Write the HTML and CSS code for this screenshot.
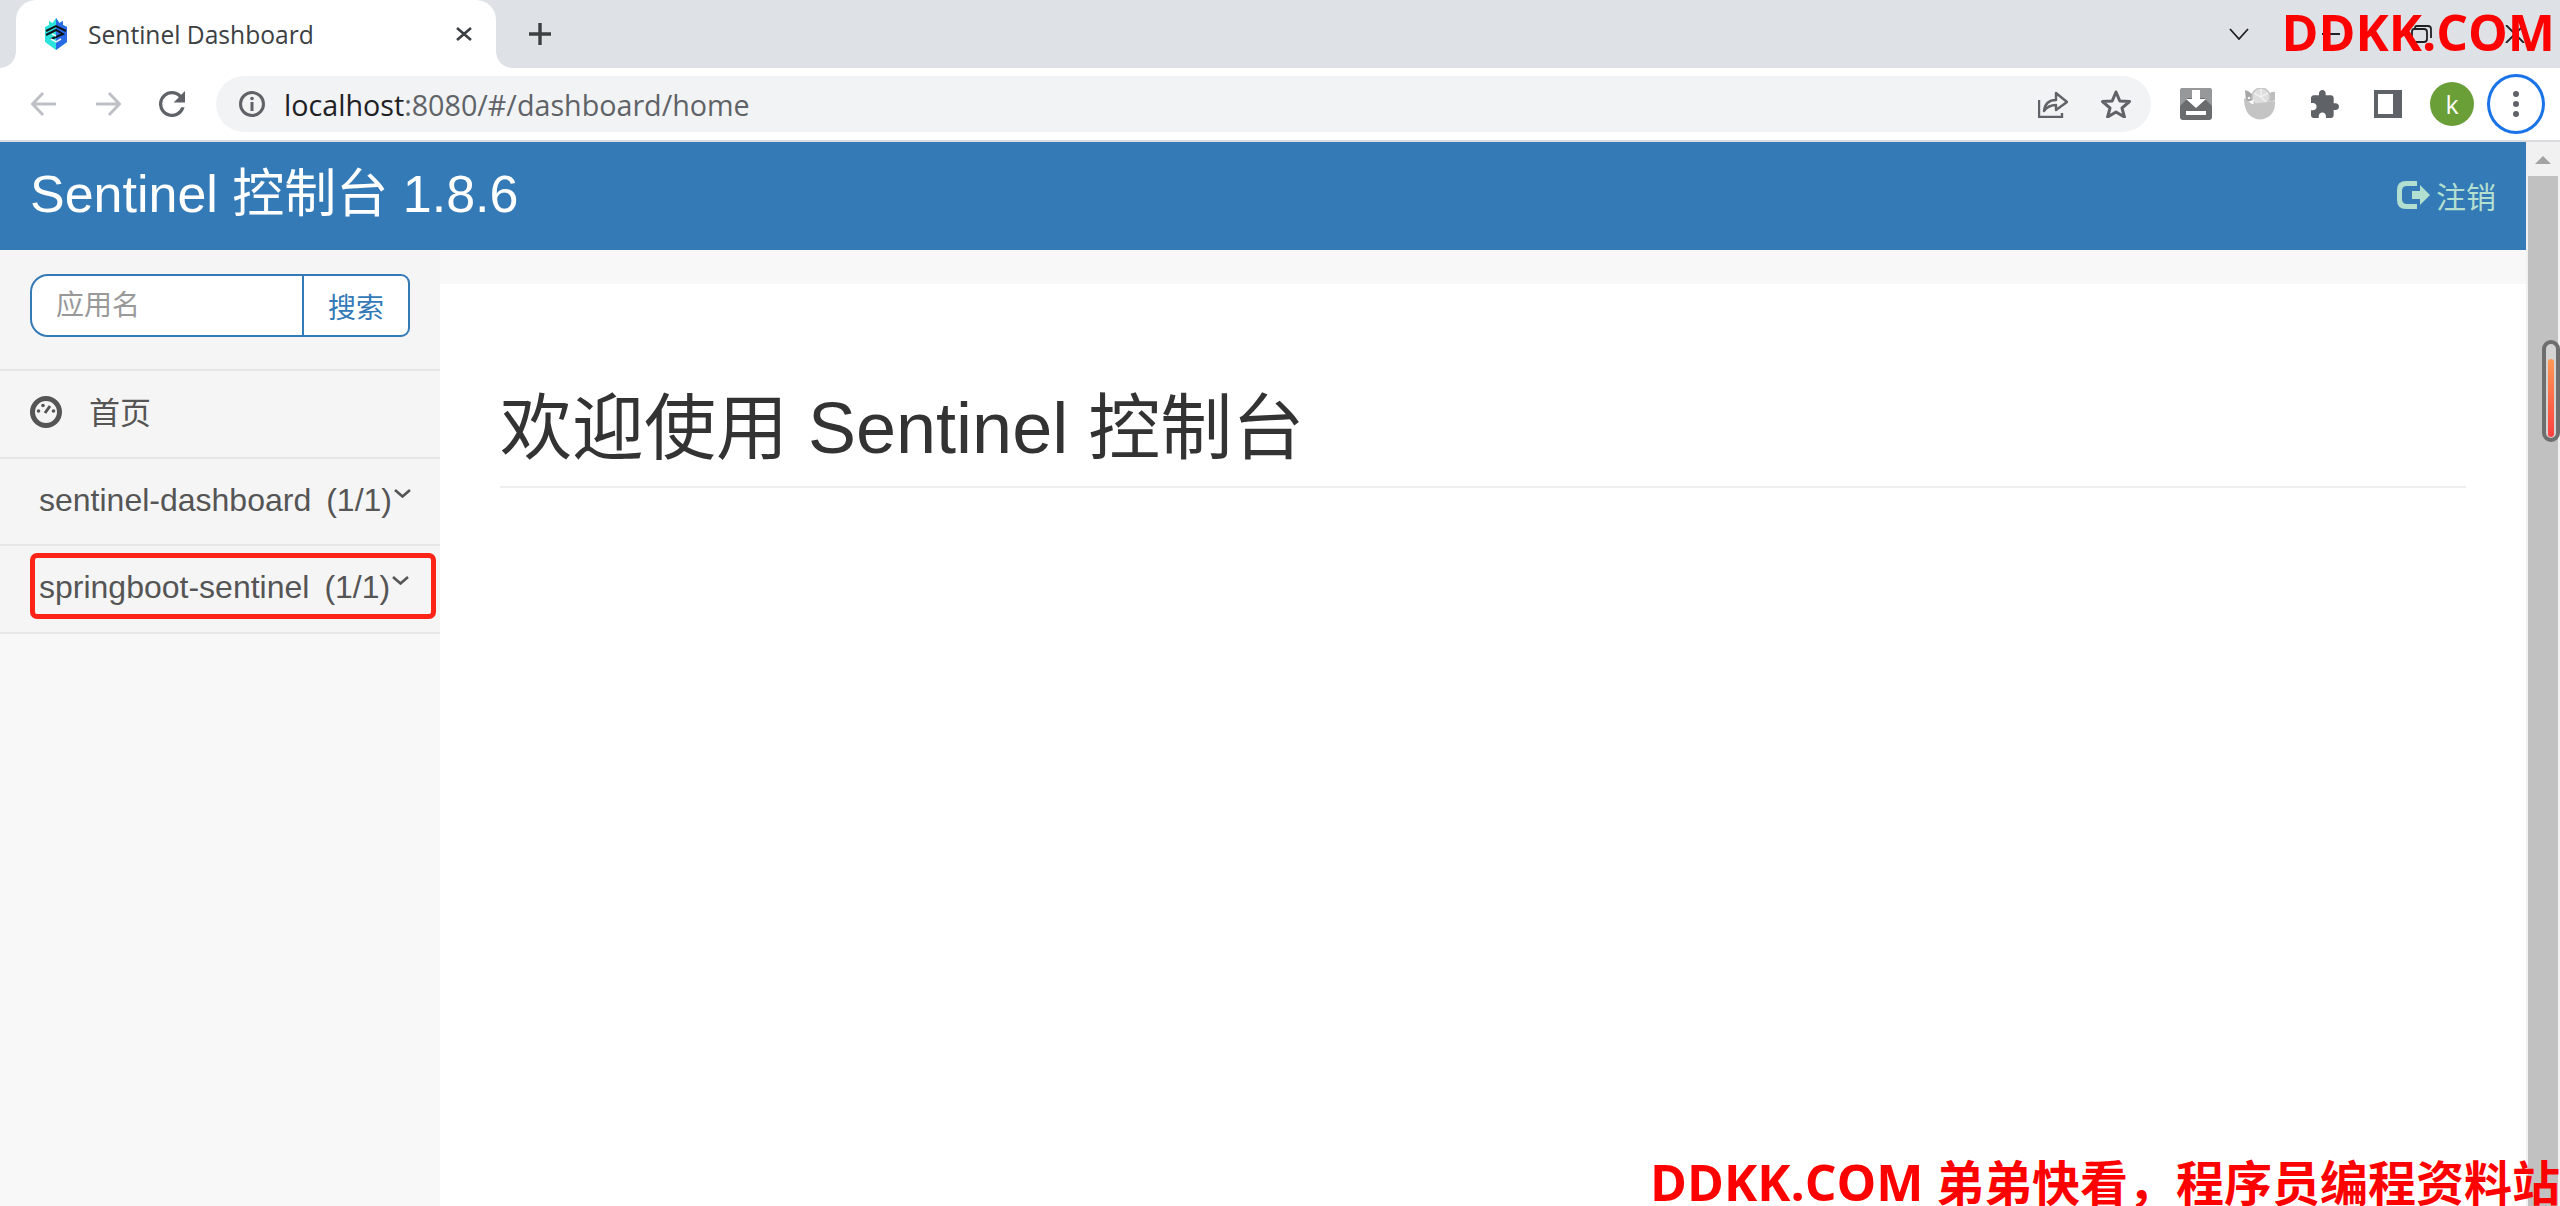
FILE: index.html
```html
<!DOCTYPE html>
<html>
<head>
  <title>Sentinel Dashboard</title>
  <link rel="stylesheet" href="styles.css">
</head>
<body>

  <!-- browser tabs -->
  <div class="tabstrip">
    <div class="tab">
      <svg class="favicon" viewBox="0 0 22 32">
        <path d="M0 9 L4 7 V3 L7.5 5 L11 0 L14.5 5 L18 3 V7 L22 9 V24 L11 32 L0 24Z" fill="#2be3dc"/>
        <path d="M11 0 L14.5 5 L18 3 V7 L22 9 V24 L11 32Z" fill="#2a6ae6"/>
        <path d="M1 13 L11 8 L21 13 M1 17 L11 12 L18 16 L6 21" fill="none" stroke="#10141c" stroke-width="2"/>
        <path d="M6 21 L11 24 L16 21 M7 16 L11 18" fill="none" stroke="#e6fbff" stroke-width="1.5"/>
      </svg>
      <span class="tab-title">Sentinel Dashboard</span>
      <svg class="tab-close" viewBox="0 0 18 14"><path d="M2 1 L16 13 M16 1 L2 13" stroke="#3c4043" stroke-width="2.6"/></svg>
    </div>
    <svg class="new-tab" viewBox="0 0 24 22"><path d="M12 0 V22 M1 11 H23" stroke="#3c4043" stroke-width="3.4"/></svg>
    <svg class="tab-list" viewBox="0 0 20 12"><path d="M1 1 L10 11 L19 1" fill="none" stroke="#202124" stroke-width="1.8"/></svg>
    <div class="win-min"></div>
    <svg class="win-max" viewBox="0 0 21 18"><path d="M4 3 Q4 1 6 1 H17 Q20 1 20 4 V13 M3 4 H13 Q16 4 16 7 V14 Q16 17 13 17 H4 Q1 17 1 14 V7 Q1 4 3 4Z" fill="none" stroke="#202124" stroke-width="1.8"/></svg>
    <svg class="win-close" viewBox="0 0 20 18"><path d="M1 0 L19 18 M19 0 L1 18" stroke="#202124" stroke-width="1.8"/></svg>
  </div>

  <!-- browser toolbar -->
  <div class="toolbar">
    <svg class="nav-icon" viewBox="0 0 26 24"><path d="M25 12 H2 M12 1 L1.5 12 L12 23" fill="none" stroke="#bdc1c6" stroke-width="3"/></svg>
    <svg class="nav-icon" viewBox="0 0 26 24"><path d="M1 12 H24 M14 1 L24.5 12 L14 23" fill="none" stroke="#bdc1c6" stroke-width="3"/></svg>
    <svg class="nav-icon reload" viewBox="4 4 16 16"><path d="M17.65 6.35A7.96 7.96 0 0 0 12 4a8 8 0 1 0 7.74 10h-2.08A6 6 0 1 1 12 6c1.66 0 3.14.69 4.22 1.78L13 11h7V4l-2.35 2.35z" fill="#5f6368"/></svg>
    <div class="omnibox">
      <svg class="info" viewBox="0 0 26 26"><circle cx="13" cy="13" r="11.5" fill="none" stroke="#5f6368" stroke-width="3"/><path d="M13 11 V20" stroke="#5f6368" stroke-width="3"/><circle cx="13" cy="7.5" r="1.8" fill="#5f6368"/></svg>
      <span class="url"><b>localhost</b>:8080/#/dashboard/home</span>
      <svg class="share" viewBox="0 0 30 28"><path d="M1 10 V27 H24 V23" fill="none" stroke="#5f6368" stroke-width="2.4"/><path d="M6 21 C7 13 12 10 18 10 V3 L29 12 L18 20 V15 C13 15 9 17 6 21Z" fill="none" stroke="#5f6368" stroke-width="2.4" stroke-linejoin="round"/></svg>
      <svg class="star" viewBox="0 0 30 28"><path d="M15 2 L18.8 11 L28.5 11.6 L21 18 L23.4 27 L15 22 L6.6 27 L9 18 L1.5 11.6 L11.2 11Z" fill="none" stroke="#5f6368" stroke-width="3" stroke-linejoin="round"/></svg>
    </div>
    <svg class="ext-download" viewBox="0 0 32 32">
      <rect width="32" height="32" rx="3" fill="#6a6c6e"/>
      <path d="M0 3 Q0 0 3 0 H29 Q32 0 32 3 V18 L24 10 H8 L0 18Z" fill="#96989a"/>
      <path d="M12 2 H20 V11 H26 L16 20 L6 11 H12Z" fill="#fff"/>
      <rect x="6" y="23" width="20" height="4" fill="#fff"/>
    </svg>
    <svg class="ext-bowl" viewBox="0 0 32 32">
      <path d="M1 2 Q9 4 10 12 L2 14Z" fill="#a6a6a6"/>
      <path d="M31 4 Q26 3 24 9 L27 14 L31 12Z" fill="#bdbdbd"/>
      <circle cx="17" cy="9" r="9" fill="#dedede" stroke="#c6c6c6" stroke-width="1.5"/>
      <path d="M17 9 V1 M17 9 L24 5 M17 9 L23 15 M17 9 L10 5" stroke="#f4f4f4" stroke-width="1.2"/>
      <path d="M0 10 L8 16 L31 13 Q32 26 22 30 Q16 33 10 30 Q0 26 0 10Z" fill="#c4c4c4"/>
      <circle cx="5" cy="10" r="1.3" fill="#f2f2f2"/><circle cx="9" cy="13" r="1.3" fill="#f2f2f2"/>
    </svg>
    <svg class="ext-puzzle" viewBox="2 1 21 21"><path d="M20.5 11H19V7c0-1.1-.9-2-2-2h-4V3.5C13 2.12 11.88 1 10.5 1S8 2.12 8 3.5V5H4c-1.1 0-1.99.9-1.99 2v3.8H3.5c1.49 0 2.7 1.21 2.7 2.7s-1.21 2.7-2.7 2.7H2V20c0 1.1.9 2 2 2h3.8v-1.5c0-1.49 1.21-2.7 2.7-2.7 1.49 0 2.7 1.21 2.7 2.7V22H17c1.1 0 2-.9 2-2v-4h1.5c1.38 0 2.5-1.12 2.5-2.5S21.88 11 20.5 11z" fill="#5f6368"/></svg>
    <div class="side-panel"></div>
    <div class="avatar">k</div>
    <div class="menu-ring"><span></span><span></span><span></span></div>
  </div>

  <div class="page">
    <div class="app">
      <div class="navbar">
        <span class="brand">Sentinel 控制台 1.8.6</span>
        <span class="logout">
          <svg class="logout-icon" viewBox="0 0 33 28">
            <path d="M20 0 H9 Q0 0 0 9 V19 Q0 28 9 28 H20 V23 H10 Q5 23 5 18 V10 Q5 5 10 5 H20Z" fill="#b2dfd0"/>
            <path d="M15 10 H23 V4 L33 14 L23 24 V18 H15Z" fill="#b2dfd0"/>
          </svg>
          注销
        </span>
      </div>
      <div class="columns">
        <div class="sidebar">
          <div class="search">
            <div class="search-box">
              <input class="search-input" placeholder="应用名">
              <span class="search-btn">搜索</span>
            </div>
          </div>
          <div class="side-row home">
            <svg class="home-icon" viewBox="0 0 32 32">
              <circle cx="16" cy="16" r="13.5" fill="#f5f5f5" stroke="#555" stroke-width="5"/>
              <circle cx="8.5" cy="15" r="1.8" fill="#555"/><circle cx="13" cy="9.5" r="1.8" fill="#555"/>
              <circle cx="23.5" cy="15" r="1.8" fill="#555"/>
              <path d="M15 17 L20 10" stroke="#555" stroke-width="3"/>
            </svg>
            <span>首页</span>
          </div>
          <div class="side-row app-row">
            <span>sentinel-dashboard</span><span class="count">(1/1)</span>
            <svg class="chevron" viewBox="0 0 17 9"><path d="M1 1 L8.5 7.5 L16 1" fill="none" stroke="#555" stroke-width="2.6"/></svg>
          </div>
          <div class="side-row app-row">
            <span>springboot-sentinel</span><span class="count">(1/1)</span>
            <svg class="chevron" viewBox="0 0 17 9"><path d="M1 1 L8.5 7.5 L16 1" fill="none" stroke="#555" stroke-width="2.6"/></svg>
            <div class="red-box"></div>
          </div>
        </div>
        <div class="content">
          <div class="strip"></div>
          <h1 class="page-title">欢迎使用 Sentinel 控制台</h1>
        </div>
      </div>
    </div>

    <!-- page scrollbar -->
    <div class="scrollbar">
      <div class="scroll-up"></div>
      <div class="scroll-track"></div>
      <div class="scroll-mark"><div class="scroll-heat"></div></div>
    </div>
  </div>

  <div class="mark-top">DDKK.COM</div>
  <div class="mark-bottom"><span class="mark-latin">DDKK.COM</span> 弟弟快看，程序员编程资料站</div>

</body>
</html>
```

FILE: styles.css
```css
* {
  box-sizing: border-box;
}

html, body {
  margin: 0;
  height: 1206px;
  overflow: hidden;
}

body {
  position: relative;
  background: #fff;
  font-family: "Liberation Sans", "Noto Sans CJK SC", sans-serif;
  color: #333;
  display: flex;
  flex-direction: column;
}

/* browser tabs */
.tabstrip {
  height: 68px;
  background: #dee1e6;
  display: flex;
  align-items: center;
  flex-shrink: 0;
}

.tab {
  position: relative;
  align-self: stretch;
  width: 480px;
  margin-left: 16px;
  padding-left: 29px;
  background: #fff;
  border-radius: 20px 20px 0 0;
  display: flex;
  align-items: center;
}

.tab::before, .tab::after {
  content: "";
  position: absolute;
  bottom: 0;
  width: 16px;
  height: 16px;
}

.tab::before {
  left: -16px;
  background: radial-gradient(circle at 0 0, transparent 15.5px, #fff 16px);
}

.tab::after {
  right: -16px;
  background: radial-gradient(circle at 100% 0, transparent 15.5px, #fff 16px);
}

.favicon {
  width: 22px;
  height: 32px;
}

.tab-title {
  margin-left: 21px;
  font-family: "Open Sans", sans-serif;
  font-size: 24.6px;
  color: #3c4043;
}

.tab-close {
  width: 18px;
  height: 14px;
  margin-left: auto;
  margin-right: 23px;
}

.new-tab {
  width: 24px;
  height: 22px;
  margin-left: 32px;
}

.tab-list {
  width: 20px;
  height: 12px;
  margin-left: auto;
}

.win-min {
  width: 18px;
  height: 2px;
  margin-left: 73px;
  background: #202124;
}

.win-max {
  width: 21px;
  height: 18px;
  margin-left: 71px;
}

.win-close {
  width: 20px;
  height: 18px;
  margin-left: 73px;
  margin-right: 35px;
}

/* browser toolbar */
.toolbar {
  height: 74px;
  background: #fff;
  border-bottom: 2px solid #dadce0;
  padding-left: 31px;
  display: flex;
  align-items: center;
  flex-shrink: 0;
}

.nav-icon {
  width: 26px;
  height: 24px;
  margin-right: 38px;
}

.reload {
  height: 26px;
  margin-right: 31px;
}

.omnibox {
  width: 1935px;
  height: 56px;
  padding-left: 23px;
  background: #f1f3f4;
  border-radius: 28px;
  display: flex;
  align-items: center;
}

.info {
  width: 26px;
  height: 26px;
}

.url {
  margin-left: 19px;
  font-family: "Open Sans", sans-serif;
  font-size: 28.7px;
  color: #5f6368;
}

.url b {
  font-weight: normal;
  color: #202124;
}

.share {
  width: 30px;
  height: 28px;
  margin-left: auto;
}

.star {
  width: 30px;
  height: 28px;
  margin-left: 33px;
  margin-right: 20px;
}

.ext-download, .ext-bowl {
  width: 32px;
  height: 32px;
}

.ext-download {
  margin-left: 29px;
}

.ext-bowl {
  margin-left: 32px;
}

.ext-puzzle {
  width: 30px;
  height: 28px;
  margin-left: 34px;
}

.side-panel {
  width: 28px;
  height: 28px;
  margin-left: 34px;
  background: #fff;
  border: 4px solid #5f6368;
  border-right-width: 9px;
}

.avatar {
  width: 44px;
  height: 44px;
  margin-left: 28px;
  border-radius: 50%;
  background: #6a9f38;
  color: #fff;
  font-family: "Open Sans", sans-serif;
  font-size: 25px;
  display: flex;
  align-items: center;
  justify-content: center;
}

.menu-ring {
  width: 58px;
  height: 60px;
  margin-left: 13px;
  border: 3px solid #1a73e8;
  border-radius: 50%;
  display: flex;
  flex-direction: column;
  align-items: center;
  justify-content: center;
  gap: 4px;
}

.menu-ring span {
  width: 6px;
  height: 6px;
  border-radius: 50%;
  background: #5f6368;
}

/* page */
.page {
  flex: 1;
  display: flex;
  min-height: 0;
}

.app {
  flex: 1;
  display: flex;
  flex-direction: column;
}

.navbar {
  height: 108px;
  background: #337ab7;
  padding: 0 30px 0 30px;
  display: flex;
  align-items: center;
  justify-content: space-between;
}

.brand {
  margin-top: -14px;
  font-size: 52px;
  color: #fff;
}

.logout {
  margin-top: -2px;
  font-size: 30px;
  color: #b2dfd0;
  display: flex;
  align-items: center;
  gap: 6px;
}

.logout-icon {
  width: 33px;
  height: 28px;
}

.columns {
  flex: 1;
  display: flex;
}

.sidebar {
  width: 440px;
  background: #f8f8f8;
}

.search {
  padding: 24px 30px 32px 30px;
  background: #f5f5f5;
  border-bottom: 2px solid #e7e7e7;
}

.search-box {
  height: 63px;
  background: #fff;
  border: 2px solid #337ab7;
  border-radius: 18px 9px 9px 18px;
  display: flex;
}

.search-input {
  width: 270px;
  border: 0;
  outline: 0;
  background: transparent;
  padding: 0 0 0 24px;
  font-family: "Liberation Sans", "Noto Sans CJK SC", sans-serif;
  font-size: 28px;
}

.search-input::placeholder {
  color: #999;
}

.search-btn {
  flex: 1;
  border-left: 2px solid #337ab7;
  color: #337ab7;
  font-size: 28px;
  display: flex;
  align-items: center;
  justify-content: center;
}

.side-row {
  position: relative;
  height: 87.5px;
  padding-bottom: 2px;
  background: #f5f5f5;
  border-bottom: 2px solid #e7e7e7;
  color: #555;
  font-size: 32px;
  display: flex;
  align-items: center;
}

.home {
  padding-left: 30px;
  font-size: 31px;
}

.home span {
  margin-left: -1px;
  margin-bottom: 4px;
}

.home-icon {
  width: 32px;
  height: 32px;
  margin-right: 28px;
  margin-bottom: 2px;
}

.app-row {
  padding-left: 39px;
}

.count {
  margin-left: 15px;
}

.chevron {
  width: 17px;
  height: 9px;
  margin-left: 2px;
  margin-bottom: 14px;
}

.red-box {
  position: absolute;
  left: 30px;
  top: 7px;
  width: 406px;
  height: 66px;
  border: 5px solid #ff2418;
  border-radius: 7px;
}

.content {
  flex: 1;
}

.strip {
  height: 34px;
  background: #f8f8f8;
}

.page-title {
  margin: 104px 60px 0;
  padding-bottom: 18px;
  border-bottom: 2px solid #eee;
  font-size: 72px;
  font-weight: normal;
  line-height: 80px;
}

/* scrollbar */
.scrollbar {
  position: relative;
  width: 34px;
  background: #f1f1f1;
  padding: 0 2px;
  display: flex;
  flex-direction: column;
}

.scroll-up {
  width: 0;
  height: 0;
  margin: 14px 0 12px 7px;
  border-left: 8px solid transparent;
  border-right: 8px solid transparent;
  border-bottom: 8px solid #a3a3a3;
}

.scroll-track {
  flex: 1;
  background: #c1c1c1;
}

.scroll-mark {
  position: absolute;
  left: 16px;
  top: 198px;
  width: 18px;
  height: 102px;
  background: #d4d4d4;
  border: 4px solid #6e6e6e;
  border-radius: 9px;
  padding: 15px 2px 1px;
}

.scroll-heat {
  height: 78px;
  background: linear-gradient(#ff9a55, #ff4040);
  border-radius: 3px;
}

/* watermarks */
.mark-top, .mark-bottom {
  position: absolute;
  color: #f00;
  font-family: "Open Sans", "Noto Sans CJK SC", sans-serif;
  font-weight: bold;
  white-space: nowrap;
}

.mark-top {
  top: 0;
  right: 5px;
  font-size: 50px;
  line-height: 64px;
}

.mark-bottom {
  top: 1158px;
  left: 1650px;
  font-size: 48px;
  line-height: 48px;
}

.mark-latin {
  font-size: 50px;
}
```
